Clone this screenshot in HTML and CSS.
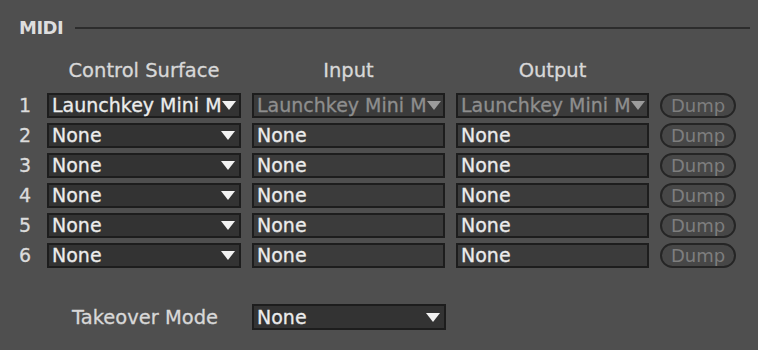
FILE: index.html
```html
<!DOCTYPE html>
<html lang="en">

<head>
  <meta charset="UTF-8">
  <meta name="viewport" content="width=device-width, initial-scale=1.0">
  <title>MIDI Preferences</title>
  <link rel="stylesheet" href="styles.css">
</head>

<body>
  <div class="prefs">
    <div class="section-title">
      <span class="title-text">MIDI</span>
      <div class="rule"></div>
    </div>

    <div class="midi-grid">
      <div></div>
      <div class="col-head">Control Surface</div>
      <div class="col-head">Input</div>
      <div class="col-head">Output</div>
      <div></div>

      <!-- slot 1 -->
      <div class="slot-num">1</div>
      <div class="chooser surface"><span class="value">Launchkey Mini M</span><span class="arrow"></span></div>
      <div class="chooser port disabled"><span class="value">Launchkey Mini M</span><span class="arrow"></span></div>
      <div class="chooser port disabled"><span class="value">Launchkey Mini M</span><span class="arrow"></span></div>
      <div class="dump">Dump</div>

      <!-- slot 2 -->
      <div class="slot-num">2</div>
      <div class="chooser surface"><span class="value">None</span><span class="arrow"></span></div>
      <div class="chooser port"><span class="value">None</span></div>
      <div class="chooser port"><span class="value">None</span></div>
      <div class="dump">Dump</div>

      <!-- slot 3 -->
      <div class="slot-num">3</div>
      <div class="chooser surface"><span class="value">None</span><span class="arrow"></span></div>
      <div class="chooser port"><span class="value">None</span></div>
      <div class="chooser port"><span class="value">None</span></div>
      <div class="dump">Dump</div>

      <!-- slot 4 -->
      <div class="slot-num">4</div>
      <div class="chooser surface"><span class="value">None</span><span class="arrow"></span></div>
      <div class="chooser port"><span class="value">None</span></div>
      <div class="chooser port"><span class="value">None</span></div>
      <div class="dump">Dump</div>

      <!-- slot 5 -->
      <div class="slot-num">5</div>
      <div class="chooser surface"><span class="value">None</span><span class="arrow"></span></div>
      <div class="chooser port"><span class="value">None</span></div>
      <div class="chooser port"><span class="value">None</span></div>
      <div class="dump">Dump</div>

      <!-- slot 6 -->
      <div class="slot-num">6</div>
      <div class="chooser surface"><span class="value">None</span><span class="arrow"></span></div>
      <div class="chooser port"><span class="value">None</span></div>
      <div class="chooser port"><span class="value">None</span></div>
      <div class="dump">Dump</div>
    </div>

    <div class="takeover">
      <div class="takeover-label">Takeover Mode</div>
      <div class="chooser surface takeover-box"><span class="value">None</span><span class="arrow"></span></div>
    </div>
  </div>
</body>

</html>
```

FILE: styles.css
```css
* {
  margin: 0;
  padding: 0;
  box-sizing: border-box;
  font-family: 'DejaVu Sans', 'Liberation Sans', sans-serif;
}

body {
  background-color: #4f4f4f;
  color: #e6e6e6;
  width: 758px;
  height: 350px;
  overflow: hidden;
}

.prefs {
  padding: 17px 8px 0 19px;
}

.section-title {
  display: flex;
  align-items: center;
  height: 22px;
  line-height: 22px;
}

.title-text {
  font-size: 18px;
  font-weight: 700;
  letter-spacing: -0.5px;
  color: #dedede;
}

.rule {
  flex: 1;
  height: 2px;
  background-color: #2c2c2c;
  margin-left: 12px;
  margin-top: -1px;
}

.midi-grid {
  display: grid;
  grid-template-columns: 17px 194px 193px 193px 76px;
  column-gap: 11px;
  row-gap: 5px;
  margin-top: 20px;
}

.col-head {
  font-size: 19.5px;
  line-height: 24px;
  color: #d8d8d8;
  text-align: center;
  padding-bottom: 5px;
  -webkit-text-stroke: 0.3px #d8d8d8;
}

.slot-num {
  font-size: 19px;
  line-height: 25px;
  color: #dcdcdc;
  -webkit-text-stroke: 0.3px #dcdcdc;
}

.chooser {
  height: 25px;
  border: 2px solid #1d1d1d;
  display: flex;
  align-items: center;
  padding: 0 2px 0 3px;
  font-size: 19px;
  color: #ececec;
  white-space: nowrap;
}

.chooser.surface {
  background-color: #333333;
}

.chooser.port {
  background-color: #3b3b3b;
}

.chooser .value {
  flex: 1;
  line-height: 21px;
  -webkit-text-stroke: 0.3px currentColor;
}

.chooser.disabled {
  color: #8e8e8e;
}

.arrow {
  flex: none;
  width: 0;
  height: 0;
  border-left: 7px solid transparent;
  border-right: 7px solid transparent;
  border-top: 9px solid #f2f2f2;
  margin-right: 2px;
}

.chooser.disabled .arrow {
  border-top-color: #9c9c9c;
  margin-right: 0;
}

.dump {
  height: 25px;
  border: 2px solid #252525;
  border-radius: 13px;
  background-color: #474747;
  color: #7e7e7e;
  font-size: 18px;
  line-height: 21px;
  text-align: center;
}

.takeover {
  display: flex;
  align-items: center;
  margin-top: 36px;
  padding-left: 53px;
}

.takeover-label {
  width: 180px;
  font-size: 19.5px;
  color: #d8d8d8;
  -webkit-text-stroke: 0.3px #d8d8d8;
}

.takeover-box {
  width: 194px;
  height: 26px;
}
```
